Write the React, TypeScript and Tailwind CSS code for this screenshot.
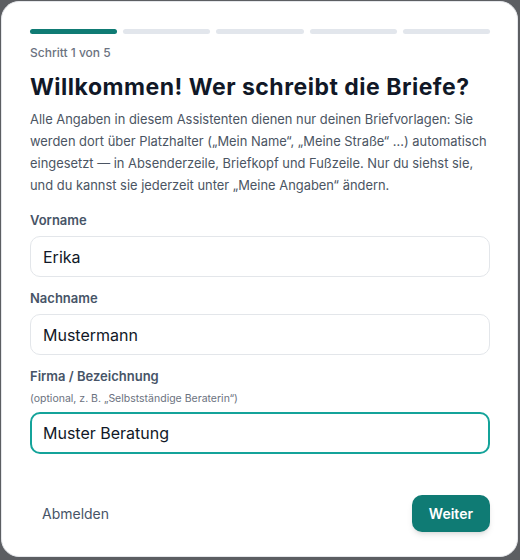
const steps = [true, false, false, false, false]

function Field({ label, hint, value, focused }: { label: string; hint?: string; value: string; focused?: boolean }) {
  return (
    <div className="flex flex-col">
      <label className="text-[13px] font-semibold text-[#475467] leading-5">{label}</label>
      {hint && <span className="text-[10.5px] text-[#6b7280] leading-4 mt-[5px]">{hint}</span>}
      <input
        readOnly
        value={value}
        className={
          focused
            ? "mt-[5px] h-[42px] rounded-[10px] border-2 border-[#14a39a] px-[11px] text-[16px] text-[#111827] outline-none"
            : "mt-[6px] h-[41px] rounded-[10px] border border-[#e3e6ea] px-3 text-[16px] text-[#111827] outline-none"
        }
      />
    </div>
  )
}

export default function App() {
  return (
    <div className="w-[520px] h-[560px] bg-[#5c5e62] pt-px pl-px pr-[2px] pb-[3px] font-['Inter',sans-serif]">
      <div className="h-full bg-white rounded-[18px] border border-[#e5e7eb] pl-[28px] pr-[27px] pt-[27px] pb-[24px] flex flex-col">
        {/* progress */}
        <div className="flex gap-[6px]">
          {steps.map((active, i) => (
            <div
              key={i}
              className={active ? "flex-1 h-[5px] rounded-full bg-[#0f7b74]" : "flex-1 h-[5px] rounded-full bg-[#e2e6ec]"}
            />
          ))}
        </div>

        <p className="mt-[11px] text-[12px] font-medium text-[#6b7280] leading-4">Schritt 1 von 5</p>

        <h1 className="mt-[12px] text-[23px] font-bold text-[#111827] leading-7 tracking-[0.5px]">
          Willkommen! Wer schreibt die Briefe?
        </h1>

        <p className="mt-[8px] text-[12.9px] text-[#4b5563] leading-[22px]">
          Alle Angaben in diesem Assistenten dienen nur deinen Briefvorlagen: Sie werden dort über Platzhalter („Mein
          Name“, „Meine Straße“ ...) automatisch eingesetzt — in Absenderzeile, Briefkopf und Fußzeile. Nur du siehst
          sie, und du kannst sie jederzeit unter „Meine Angaben“ ändern.
        </p>

        <div className="mt-[13px] flex flex-col gap-[11px]">
          <Field label="Vorname" value="Erika" />
          <Field label="Nachname" value="Mustermann" />
          <Field
            label="Firma / Bezeichnung"
            hint="(optional, z. B. „Selbstständige Beraterin“)"
            value="Muster Beratung"
            focused
          />
        </div>

        <div className="mt-auto flex items-center justify-between">
          <button className="px-3 py-2 text-[14px] text-[#475467] rounded-lg">Abmelden</button>
          <button className="h-[37px] px-[17px] rounded-[10px] bg-[#0f7b74] text-white text-[14px] font-semibold shadow-md">
            Weiter
          </button>
        </div>
      </div>
    </div>
  )
}
